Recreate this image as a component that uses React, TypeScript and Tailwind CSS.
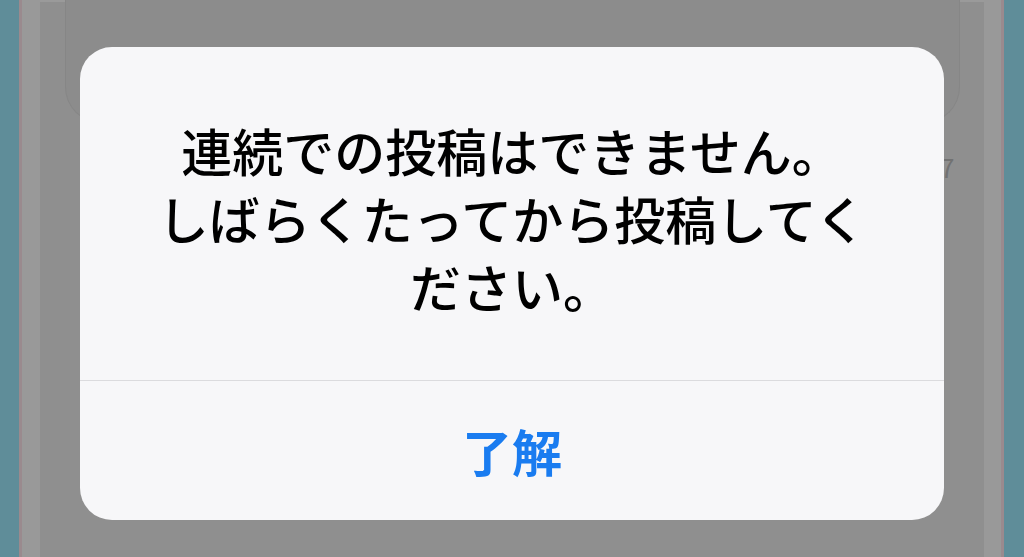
export default function App() {
  return (
    <div
      className="relative flex w-[1024px] h-[557px] overflow-hidden bg-[#8f8f8f]"
      style={{ fontFamily: '"Noto Sans CJK JP", "Noto Sans", sans-serif' }}
    >
      {/* edges of the device behind */}
      <div className="w-[19px] bg-[#5f8d99]" />
      <div className="w-[3px] bg-[#9a8a8e]" />
      <div className="w-[18px] bg-[#999999]" />

      <div className="relative flex-1 border-t-2 border-[#9a9a9a]">
        <div className="ml-[25px] mr-[24px] h-[123px] -mt-[2px] rounded-b-[36px] border border-t-0 border-[#868686] bg-[#8c8c8c]" />
        <div className="absolute left-[900px] top-[152px] text-[26px] leading-none text-[#727272]">7</div>
      </div>

      <div className="w-[17px] bg-[#999999]" />
      <div className="w-[3px] bg-[#9a8a8e]" />
      <div className="w-[20px] bg-[#5f8d99]" />

      {/* alert */}
      <div className="absolute left-[80px] top-[47px] w-[864px] h-[473px] rounded-[32px] bg-[#f7f7f9] flex flex-col">
        <div className="px-[68px] pt-[69px] pb-[60px] text-center text-[51px] leading-[68px] font-medium text-black">
          連続での投稿はできません。
          <br />
          しばらくたってから投稿してください。
        </div>
        <div className="h-px bg-[#dbdbde]" />
        <div className="flex-1 flex items-center justify-center">
          <span className="text-[50px] leading-none font-semibold text-[#1a7cf0] -mt-[2px]">了解</span>
        </div>
      </div>
    </div>
  )
}
